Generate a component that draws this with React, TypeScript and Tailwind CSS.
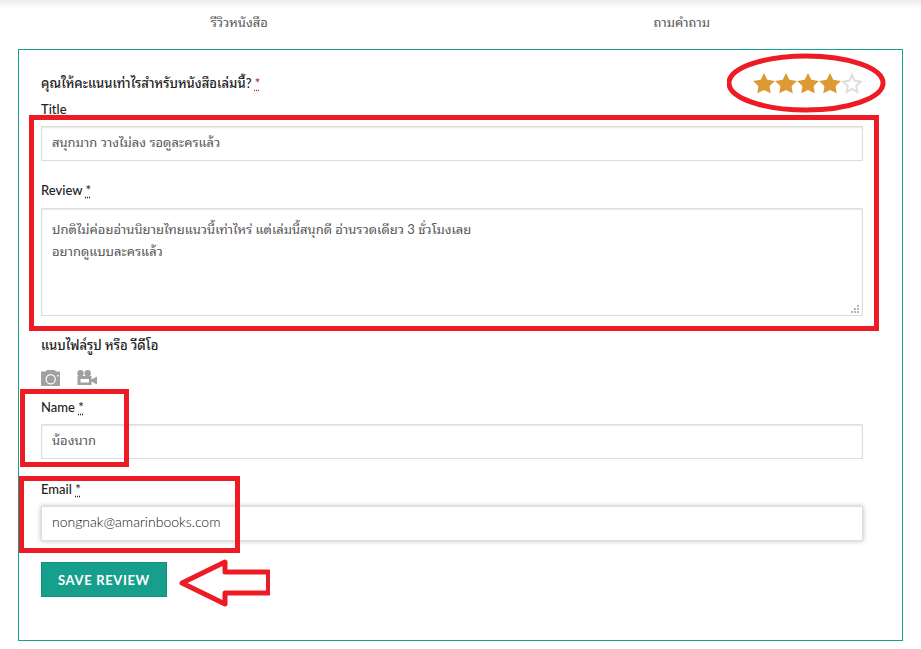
import { useState } from "react";
import type { ReactNode } from "react";

const TABS = ["รีวิวหนังสือ", "ถามคำถาม"];
const SCORES = [1, 2, 3, 4, 5];

const inputClass =
  "mt-1 block h-[35px] w-full border border-[#ddd] bg-white px-[10px] pb-1 outline-none";

export default function App() {
  const [score, setScore] = useState(4);

  return (
    <div className="min-h-screen bg-white pb-2 font-['Lato','Noto_Sans_Thai_Looped','Loma','Waree','Noto_Sans_Thai',sans-serif] text-[13px] text-[#222]">
      <div className="h-2 bg-linear-to-b from-[#ececec] to-white" />
      <nav className="mx-[18px] grid h-[41px] grid-cols-2 pb-3">
        {TABS.map((tab) => (
          <a key={tab} href="#" className="flex items-center justify-center text-[#555]">
            {tab}
          </a>
        ))}
      </nav>

      <form
        className="mx-[18px] border border-[#169f8c] pt-5 pr-[39px] pb-[43px] pl-[22px]"
        onSubmit={(event) => event.preventDefault()}
      >
        <fieldset className="flex h-[26px] items-center justify-between">
          <legend className="float-left leading-[26px] font-medium">
            คุณให้คะแนนเท่าไรสำหรับหนังสือเล่มนี้? <Required className="text-[#b22222]" />
          </legend>
          <div className="relative ml-auto flex">
            {SCORES.map((value) => (
              <label key={value} className="relative w-[22px]">
                <input
                  type="radio"
                  name="score"
                  aria-label={`${value}`}
                  checked={score === value}
                  onChange={() => setScore(value)}
                  className="absolute inset-0 cursor-pointer appearance-none"
                />
                <Star filled={value <= score} />
              </label>
            ))}
            <svg
              className="pointer-events-none absolute -top-5 -left-[26px] h-[60px] w-[160px]"
              viewBox="0 0 160 60"
              fill="none"
            >
              <ellipse cx="79" cy="30" rx="77" ry="27" stroke="#ed1c24" strokeWidth="5" />
            </svg>
          </div>
        </fieldset>

        <FieldLabel id="title">Title</FieldLabel>
        <Marked className="-top-[11px] -right-4 -bottom-[15px] -left-3">
          <input
            id="title"
            className={`${inputClass} text-[#555] shadow-[inset_0_1px_2px_rgba(0,0,0,0.1)]`}
            defaultValue="สนุกมาก วางไม่ลง รอดูละครแล้ว"
          />
          <div className="mt-4">
            <FieldLabel id="review">
              Review <Required />
            </FieldLabel>
          </div>
          <div className="relative mt-[5px]">
            <textarea
              id="review"
              className="block h-[108px] w-full resize-none border border-[#ddd] px-[10px] py-[9px] leading-[22px] text-[#555] shadow-[inset_0_1px_2px_rgba(0,0,0,0.1)] outline-none"
              defaultValue={
                "ปกติไม่ค่อยอ่านนิยายไทยแนวนี้เท่าไหร่ แต่เล่มนี้สนุกดี อ่านรวดเดียว 3 ชั่วโมงเลย\nอยากดูแบบละครแล้ว"
              }
            />
            <ResizeGrip />
          </div>
        </Marked>

        <p className="mt-4 leading-[26px] font-medium">แนบไฟล์รูป หรือ วีดีโอ</p>
        <div className="mt-3 mb-2 flex gap-4 text-[#a0a0a0]">
          <button type="button" aria-label="แนบไฟล์รูป">
            <CameraIcon />
          </button>
          <button type="button" aria-label="แนบวีดีโอ">
            <VideoIcon />
          </button>
        </div>

        <Marked className="-top-[5px] -bottom-2 -left-[21px] w-[109px]">
          <FieldLabel id="name">
            Name <Required />
          </FieldLabel>
          <input
            id="name"
            className={`${inputClass} text-[#555] shadow-[inset_0_1px_2px_rgba(0,0,0,0.1)]`}
            defaultValue="น้องนาก"
          />
        </Marked>

        <div className="mt-[17px]">
          <Marked className="top-0 -bottom-3 -left-[22px] w-[221px]">
            <FieldLabel id="email">
              Email <Required />
            </FieldLabel>
            <input
              id="email"
              type="email"
              className={`${inputClass} text-sm font-light text-[#111] shadow-[0_0_5px_rgba(0,0,0,0.25)]`}
              defaultValue="nongnak@amarinbooks.com"
            />
          </Marked>
        </div>

        <div className="relative mt-[21px] w-fit">
          <button
            type="submit"
            className="block h-[35px] border border-[#14907f] bg-[#169f8c] px-4 pt-0.5 font-bold tracking-wider text-white"
          >
            SAVE REVIEW
          </button>
          <svg
            className="pointer-events-none absolute -top-[3px] left-full ml-3 h-12 w-[91px]"
            viewBox="0 0 91 48"
            fill="none"
          >
            <path
              d="M3 24 L46 3 V13 H89.500 V34 H46 V45 Z"
              stroke="#ed1c24"
              strokeWidth="5"
              strokeLinejoin="round"
            />
          </svg>
        </div>
      </form>
    </div>
  );
}

function FieldLabel({ id, children }: { id: string; children: ReactNode }) {
  return (
    <label htmlFor={id} className="block leading-[26px] font-medium">
      {children}
    </label>
  );
}

function Required({ className = "" }: { className?: string }) {
  return (
    <abbr title="required" className={`underline decoration-dotted underline-offset-2 ${className}`}>
      *
    </abbr>
  );
}

// Content with a red highlight frame drawn over it
function Marked({ className, children }: { className: string; children: ReactNode }) {
  return (
    <div className="relative">
      {children}
      <span className={`pointer-events-none absolute border-5 border-[#ed1c24] ${className}`} />
    </div>
  );
}

function Star({ filled }: { filled: boolean }) {
  return (
    <svg className="block h-[21px] w-[22px]" viewBox="0 0 22 21">
      {filled ? (
        <path
          d="M11 0 L14.300 6.700 L21.900 7.900 L16.600 13.100 L17.700 20.300 L11 17 L4.300 20.300 L5.400 13.100 L0.100 7.900 L7.700 6.700 Z"
          fill="#dd9933"
        />
      ) : (
        <path
          d="M11 2 L13.600 7.700 L19.800 8.600 L15.300 12.800 L16.400 19 L11 16 L5.600 19 L6.700 12.800 L2.200 8.600 L8.400 7.700 Z"
          fill="none"
          stroke="#dddddd"
          strokeWidth="2"
        />
      )}
    </svg>
  );
}

function ResizeGrip() {
  return (
    <svg
      className="pointer-events-none absolute right-1 bottom-[3px] h-2 w-2"
      viewBox="0 0 8 8"
      fill="#b8b4b4"
    >
      <path d="M6 0h2v2H6zM3 3h2v2H3zM6 3h2v2H6zM0 6h2v2H0zM3 6h2v2H3zM6 6h2v2H6z" />
    </svg>
  );
}

function CameraIcon() {
  return (
    <svg className="block h-4 w-5" viewBox="0 0 20 16" fill="none">
      <path d="M0 1.500 H4.500 L6 0 H13.500 L15 1.500 H19 V16 H0 Z" fill="currentColor" />
      <circle cx="9.700" cy="9.200" r="4.600" stroke="#ffffff" strokeWidth="1.200" />
      <path d="M16 5h1.500v1.500h-1.500z" fill="#ffffff" />
    </svg>
  );
}

function VideoIcon() {
  return (
    <svg className="block h-4 w-5" viewBox="0 0 20 16" fill="currentColor">
      <circle cx="3.500" cy="3.200" r="3.200" />
      <circle cx="10.700" cy="3.200" r="3.200" />
      <path
        fillRule="evenodd"
        d="M0.500 6 H14.500 V9.500 L20 6.500 V14.500 L14.500 11.500 V15 H0.500 Z M3.500 9 V12.500 H12 V9 Z"
      />
    </svg>
  );
}
